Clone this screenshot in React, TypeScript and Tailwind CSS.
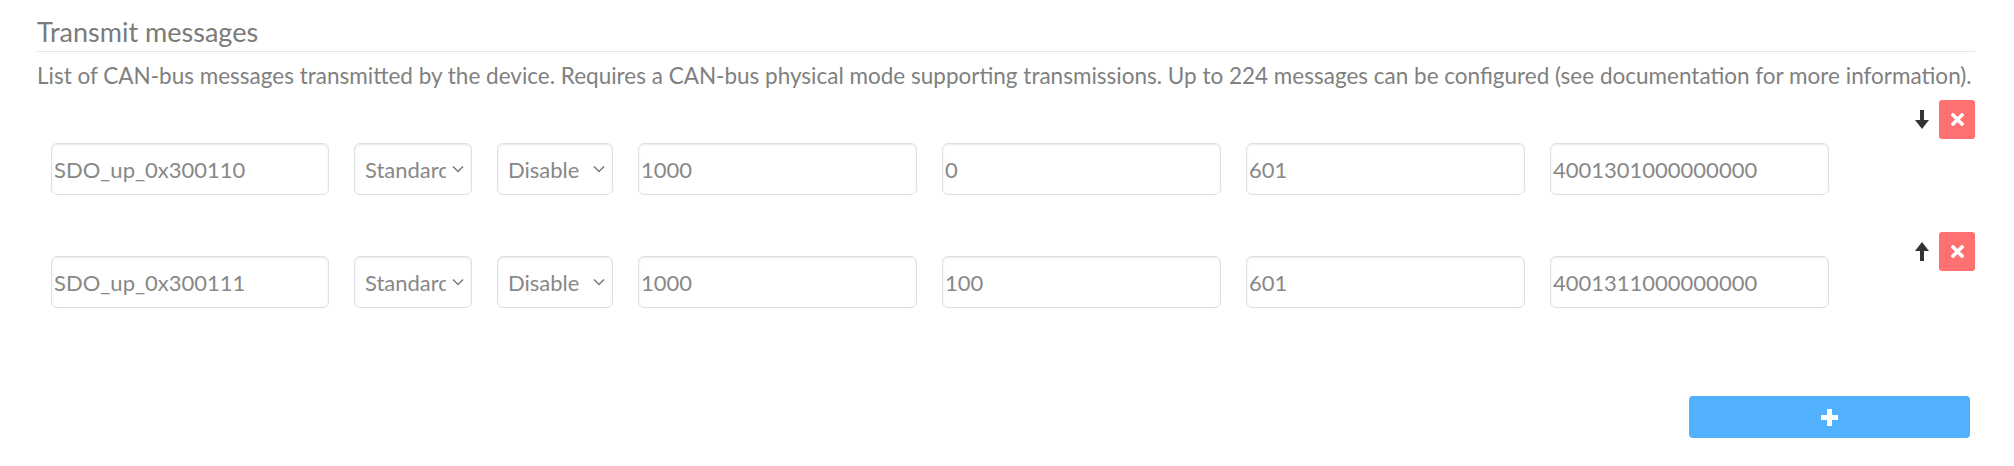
import React from "react";

const font = "font-['Lato',sans-serif]";

function TextBox({ value, w }: { value: string; w: string }) {
  return (
    <div
      className={`${w} h-[52px] shrink-0 flex items-center pl-[2px] rounded-[6px] border border-[#e0e0e0] bg-white shadow-[inset_0_1px_2px_rgba(0,0,0,0.09)] text-[22px] text-[#888888] overflow-hidden whitespace-nowrap`}
    >
      {value}
    </div>
  );
}

function SelectBox({ value, w, clip }: { value: string; w: string; clip: string }) {
  return (
    <div
      className={`${w} h-[52px] shrink-0 flex items-center justify-between pl-[10px] pr-[7px] rounded-[6px] border border-[#e0e0e0] bg-white shadow-[inset_0_1px_2px_rgba(0,0,0,0.09)] text-[22px] text-[#888888]`}
    >
      <span className={`${clip} overflow-hidden whitespace-nowrap`}>{value}</span>
      <svg width="12" height="8" viewBox="0 0 12 8" className="shrink-0">
        <path d="M1 1.5 L6 6.5 L11 1.5" fill="none" stroke="#7a7a7a" strokeWidth="1.5" />
      </svg>
    </div>
  );
}

function Arrow({ up }: { up?: boolean }) {
  return (
    <svg width="14" height="19" viewBox="0 0 14 19" className={up ? "rotate-180" : ""}>
      <rect x="5" y="0" width="4" height="11" fill="#333" />
      <path d="M0 10 L14 10 L7 19 Z" fill="#333" />
    </svg>
  );
}

function RemoveButton() {
  return (
    <div className="w-[36px] h-[39px] rounded-[3px] bg-[#ff7070] flex items-center justify-center">
      <svg width="13" height="13" viewBox="0 0 13 13">
        <path d="M2 2 L11 11 M11 2 L2 11" stroke="#fff" strokeWidth="3.6" strokeLinecap="square" />
      </svg>
    </div>
  );
}

function Row({
  name,
  offset,
  freq,
  up,
  pad,
  data,
}: {
  name: string;
  offset: string;
  freq: string;
  up?: boolean;
  pad: string;
  data: string;
}) {
  return (
    <div className="flex items-start justify-between">
      <div className={`flex gap-[25px] pl-[14px] ${pad}`}>
        <TextBox value={name} w="w-[278px]" />
        <SelectBox value="Standard" w="w-[118px]" clip="w-[81px]" />
        <SelectBox value="Disable" w="w-[116px]" clip="w-[80px]" />
        <TextBox value={freq} w="w-[279px]" />
        <TextBox value={offset} w="w-[279px]" />
        <TextBox value="601" w="w-[279px]" />
        <TextBox value={data} w="w-[279px]" />
      </div>
      <div className="flex items-center gap-[10px] h-[40px]">
        <Arrow up={up} />
        <RemoveButton />
      </div>
    </div>
  );
}

export default function App() {
  return (
    <div className={`w-[2014px] h-[466px] bg-white ${font} pl-[37px] pr-[39px]`}>
      <div className="pt-[15px] pb-[2px] border-b border-[#e5e5e5]">
        <div className="text-[27px] leading-[34px] text-[#7b7b7b]">Transmit messages</div>
      </div>
      <div className="mt-[10px] text-[22.5px] leading-[28px] text-[#808080] whitespace-nowrap">
        List of CAN-bus messages transmitted by the device. Requires a CAN-bus physical mode supporting transmissions. Up to 224 messages can be configured (see documentation for more information).
      </div>
      <div className="mt-[9px]">
        <Row name="SDO_up_0x300110" freq="1000" offset="0" pad="pt-[44px]" data="4001301000000000" />
      </div>
      <div className="mt-[36px]">
        <Row name="SDO_up_0x300111" freq="1000" offset="100" up pad="pt-[25px]" data="4001311000000000" />
      </div>
      <div className="mt-[88px] flex justify-end pr-[5px]">
        <div className="w-[281px] h-[42px] rounded-[4px] bg-[#52b1ff] flex items-center justify-center">
          <svg width="17" height="17" viewBox="0 0 17 17">
            <path d="M8.5 0 V17 M0 8.5 H17" stroke="#fff" strokeWidth="5" />
          </svg>
        </div>
      </div>
    </div>
  );
}
